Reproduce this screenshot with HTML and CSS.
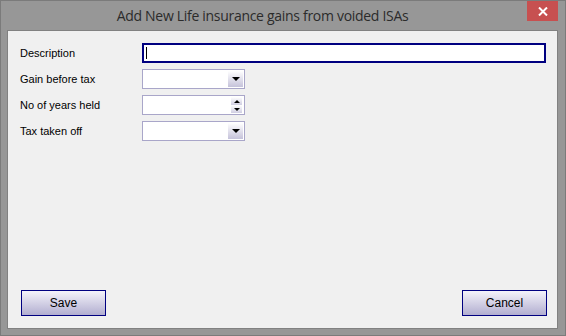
FILE: index.html
```html
<!DOCTYPE html>
<html>
<head>
<meta charset="utf-8">
<link rel="stylesheet" href="styles.css">
</head>
<body>
<div class="window">
  <div class="titlebar">
    <div class="title">Add New Life insurance gains from voided ISAs</div>
    <div class="close"><svg width="10" height="9" viewBox="0 0 10 9"><path d="M1 0.5 L9 8.5 M9 0.5 L1 8.5" stroke="#fff" stroke-width="2"/></svg></div>
  </div>
  <div class="client">
    <div class="form">
      <label class="lbl">Description</label>
      <div class="text focus"><span class="caret"></span></div>
      <label class="lbl">Gain before tax</label>
      <div class="combo"><span class="field"></span><span class="btn"><span class="tri down"></span></span></div>
      <label class="lbl">No of years held</label>
      <div class="combo"><span class="field"></span><span class="spin"><span class="half"><span class="tri small up"></span></span><span class="half"><span class="tri small down"></span></span></span></div>
      <label class="lbl">Tax taken off</label>
      <div class="combo"><span class="field"></span><span class="btn"><span class="tri down"></span></span></div>
    </div>
    <div class="actions">
      <button class="pbtn">Save</button>
      <button class="pbtn">Cancel</button>
    </div>
  </div>
</div>
</body>
</html>
```

FILE: styles.css
```css
* { box-sizing: border-box; }
html, body { margin: 0; padding: 0; }
body { width: 566px; height: 336px; overflow: hidden; background: #979797; }
.window {
  width: 566px; height: 336px;
  border: 1px solid #7b7b7b;
  background: #979797;
  display: flex; flex-direction: column;
  padding: 0 7px 6px 6px;
}
.titlebar { height: 29px; position: relative; display: flex; justify-content: center; align-items: flex-start; padding-right: 40px; }
.title {
  font-family: "Open Sans", "Liberation Sans", sans-serif;
  font-size: 14px; color: #2b2b2b; padding-top: 6px; line-height: 18px;
  letter-spacing: -0.3px;
}
.close {
  position: absolute; right: 0px; top: 0; width: 31px; height: 20px;
  background: #c75050; display: flex; align-items: center; justify-content: center;
}
.client {
  flex: 1; background: #f0f0f0; border: 1px solid #818181;
  display: flex; flex-direction: column; justify-content: space-between;
  padding: 12px 10px 12px 11px;
  font-family: "Liberation Sans", Arial, sans-serif; font-size: 11px; color: #000;
}
.form {
  display: grid; grid-template-columns: 123px 404px; grid-auto-rows: 20px; row-gap: 6px;
  align-items: center;
}
.lbl { line-height: 14px; padding-left: 1px; }
.text { height: 20px; background: #fff; border: 2px solid #000080; position: relative; }
.caret { position: absolute; left: 2px; top: 2px; width: 1px; height: 12px; background: #000; }
.combo {
  width: 103px; height: 20px; border: 1px solid #a9a6c9; background: #fff;
  display: flex; padding: 1px;
}
.field { flex: 1; }
.btn {
  width: 15px; background: linear-gradient(#ffffff, #c5c2da);
  display: flex; align-items: center; justify-content: center;
}
.spin { width: 11px; display: flex; flex-direction: column; margin-right: 1px; }
.half { flex: 1; background: linear-gradient(#ffffff, #d0cee2); display: flex; align-items: center; justify-content: center; }
.tri { width: 0; height: 0; border-left: 4px solid transparent; border-right: 4px solid transparent; }
.tri.down { border-top: 4px solid #000; }
.tri.up { border-bottom: 4px solid #000; }
.tri.small { border-left-width: 3px; border-right-width: 3px; }
.tri.small.down { border-top-width: 3px; }
.tri.small.up { border-bottom-width: 3px; }
.actions { display: flex; justify-content: space-between; padding-left: 2px; }
.pbtn {
  width: 85px; height: 26px; border: 1px solid #000080;
  background: linear-gradient(#f4f3fa, #b2aed0);
  font-family: "Liberation Sans", Arial, sans-serif; font-size: 12px; color: #000;
  padding: 0; margin: 0;
}
```
